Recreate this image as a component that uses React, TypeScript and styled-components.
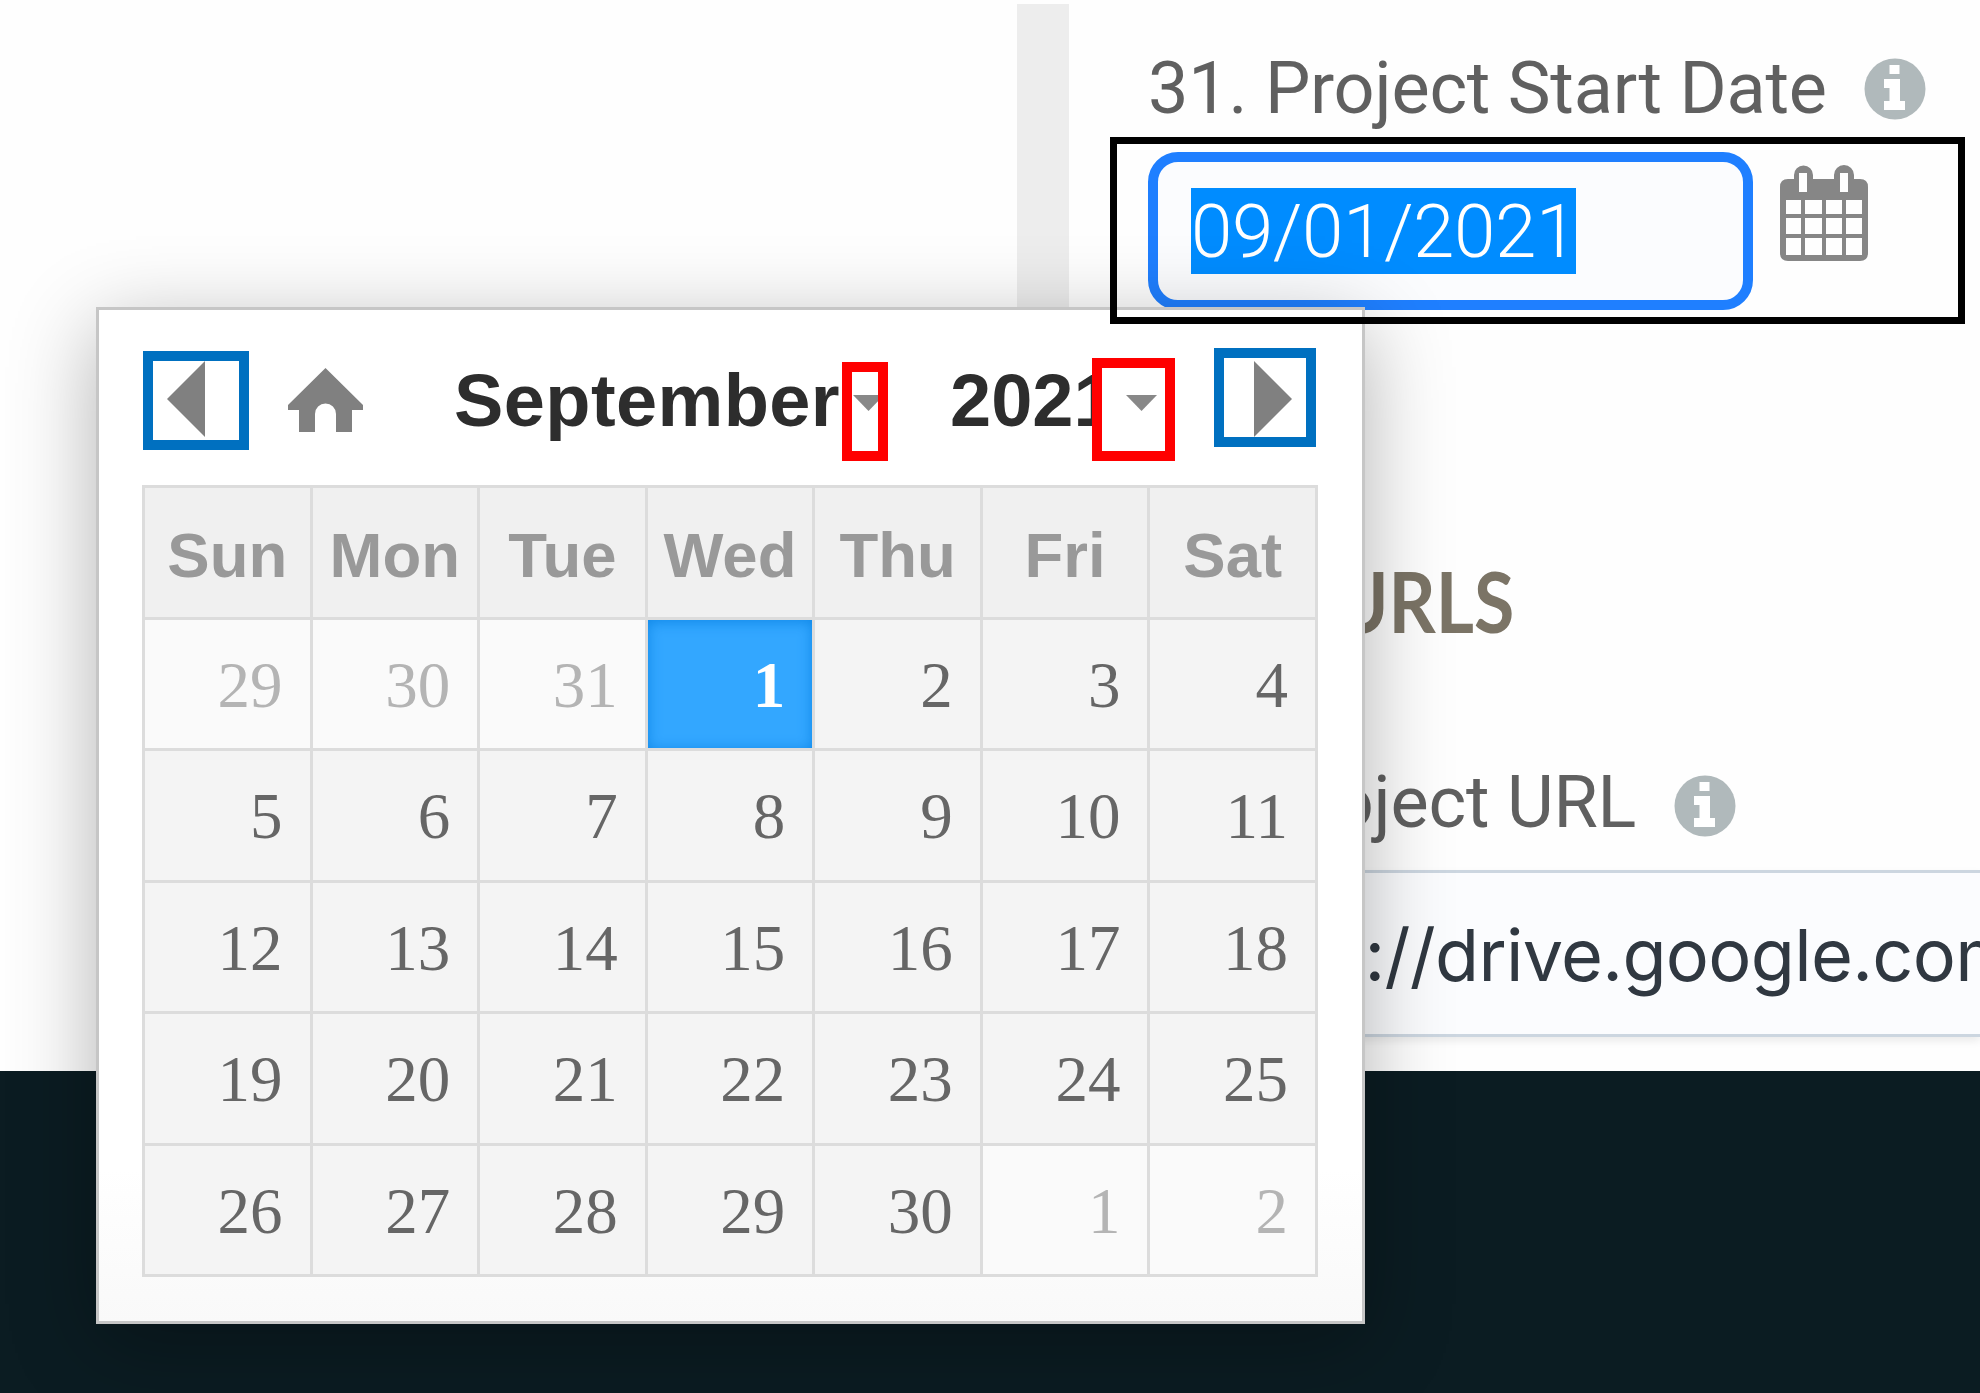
import React from "react";
import styled, { createGlobalStyle } from "styled-components";

const Global = createGlobalStyle`
  * { box-sizing: border-box; }
  body { margin: 0; background: #fff; }
`;

const Page = styled.div`
  position: relative;
  width: 1980px;
  height: 1393px;
  overflow: hidden;
  display: flex;
  flex-direction: column;
  background: #fefefe;
  font-family: Roboto, "Liberation Sans", sans-serif;
`;

const Main = styled.main`
  height: 1071px;
  display: flex;
`;

const Divider = styled.div`
  width: 52px;
  height: 1000px;
  margin: 4px 0 0 1017px;
  background: #ededed;
  flex: none;
`;

const Form = styled.section`
  width: 911px;
  flex: none;
  display: flex;
  flex-direction: column;
  padding-left: 79px;
`;

const Label = styled.div<{ $top: number; $indent: number; $gap: number }>`
  display: flex;
  align-items: center;
  gap: ${(p) => p.$gap}px;
  height: 84px;
  margin-top: ${(p) => p.$top}px;
  padding-left: ${(p) => p.$indent}px;
  font-size: 72px;
  line-height: 84px;
  letter-spacing: -0.22px;
  color: #606060;
  white-space: nowrap;
`;

const DateRow = styled.div`
  display: flex;
  align-items: flex-start;
  gap: 27px;
  margin-top: 21px;
`;

const DateField = styled.div`
  width: 605px;
  height: 158px;
  border: 10px solid #1f7fff;
  border-radius: 30px;
  background: #fbfcfe;
  padding: 26px 0 0 33px;
`;

const Selection = styled.span`
  display: block;
  width: 385px;
  height: 86px;
  background: #008cff;
  color: #fff;
  font-size: 74.5px;
  font-weight: 300;
  letter-spacing: -0.4px;
  line-height: 88px;
  white-space: nowrap;
`;

const Heading = styled.h2`
  margin: 241px 0 0 186px;
  height: 100px;
  font: 700 84px/100px Lato, sans-serif;
  color: #7b7466;
  transform: scaleX(0.875);
  transform-origin: left;
`;

const UrlField = styled.div`
  height: 167px;
  margin-top: 25px;
  border: 3px solid #ccd6e0;
  border-right: 0;
  background: #fbfcfe;
  box-shadow: 0 4px 8px rgba(0, 0, 0, 0.08);
  padding-left: 47px;
  font: 400 72px/164px Inter, sans-serif;
  letter-spacing: -0.7px;
  color: #303841;
  white-space: nowrap;
  overflow: hidden;
`;

const Footer = styled.footer`
  flex: 1;
  background: #0b1c22;
`;

const Popup = styled.div`
  position: absolute;
  left: 96px;
  top: 307px;
  width: 1269px;
  height: 1017px;
  border: 3px solid #c6c6c6;
  background: linear-gradient(#fff 85%, #f9f9f9);
  box-shadow: 0 20px 80px rgba(0, 0, 0, 0.3);
  padding: 0 43px;
`;

const Toolbar = styled.div`
  display: flex;
  align-items: center;
  height: 175px;
  font: 700 74px/84px "Liberation Sans", sans-serif;
  color: #2d2d2d;
  padding: 3px 0 0 25px;
`;

const MonthName = styled.span`
  margin-left: 91px;
  padding-top: 4px;
  width: 399px;
  letter-spacing: 0.4px;
`;

const YearName = styled.span`
  margin-left: 66px;
  padding-top: 4px;
  width: 151px;
  overflow: hidden;
`;

const Grid = styled.div`
  display: grid;
  grid-template-columns: repeat(7, minmax(0, 1fr));
  grid-template-rows: repeat(6, minmax(0, 1fr));
  gap: 3px;
  width: 1176px;
  height: 792px;
  border: 3px solid #dcdcdc;
  background: #dcdcdc;
`;

const Weekday = styled.div`
  background: #f0f0f0;
  color: #999;
  font: 700 63.5px/135px "Liberation Sans", sans-serif;
  text-align: center;
  overflow: hidden;
`;

const Day = styled.div<{ $kind: string }>`
  padding-right: 27px;
  text-align: right;
  font: ${(p) => (p.$kind === "selected" ? 700 : 400)} 65px/130px "Liberation Serif", serif;
  color: ${(p) => (p.$kind === "selected" ? "#fff" : p.$kind === "outside" ? "#b4b4b4" : "#666")};
  background: ${(p) => (p.$kind === "selected" ? "#33a7ff" : p.$kind === "outside" ? "#fafafa" : "#f4f4f4")};
  box-shadow: ${(p) => (p.$kind === "selected" ? "inset 0 2px 14px #1088e8" : "none")};
`;

const Mark = styled.div<{ $x: number; $y: number; $w: number; $h: number; $color: string; $line?: number }>`
  position: absolute;
  left: ${(p) => p.$x}px;
  top: ${(p) => p.$y}px;
  width: ${(p) => p.$w}px;
  height: ${(p) => p.$h}px;
  border: ${(p) => p.$line ?? 10}px solid ${(p) => p.$color};
`;

const Svg = styled.svg<{ $ml?: number; $mt?: number }>`
  display: block;
  flex: none;
  margin-left: ${(p) => p.$ml ?? 0}px;
  margin-top: ${(p) => p.$mt ?? 0}px;
`;

const Info = ({ shift }: { shift: number }) => (
  <Svg width="62" height="62" viewBox="0 0 62 62" $mt={shift}>
    <circle cx="31" cy="31" r="30.5" fill="#b0b9bb" />
    <path d="M25.500 7h10v9h-10zM20 21h16v22h5v9H20v-9h5.500V30H20z" fill="#fff" />
  </Svg>
);

const CalendarIcon = () => (
  <Svg width="89" height="97" viewBox="0 0 89 97" $mt={13}>
    <path
      fill="#868686"
      fillRule="evenodd"
      d="M8 14h6V10a9.500 9.500 0 0 1 19 0v4h21V10a9.500 9.500 0 0 1 20 0v4h6q8 0 8 8v66q0 8-8 8H8q-8 0-8-8V22q0-8 8-8zM19 8v19h8V8zM60 8v19h8V8zM6 35v14h15V35zM25 35v14h17V35zM46 35v14h16V35zM66 35v14h16V35zM6 53v16h15V53zM25 53v16h17V53zM46 53v16h16V53zM66 53v16h16V53zM6 73v17h15V73zM25 73v17h17V73zM46 73v17h16V73zM66 73v17h16V73z"
    />
  </Svg>
);

const weekdays = ["Sun", "Mon", "Tue", "Wed", "Thu", "Fri", "Sat"];
const days = [29, 30, 31, ...Array.from({ length: 30 }, (_, i) => i + 1), 1, 2];

const kindOf = (i: number) => (i === 3 ? "selected" : i < 3 || i > 32 ? "outside" : "normal");

export default function App() {
  return (
    <Page>
      <Global />
      <Main>
        <Divider />
        <Form>
          <Label $top={47} $indent={0} $gap={37}>
            <span>31. Project Start Date</span>
            <Info shift={-1} />
          </Label>
          <DateRow>
            <DateField>
              <Selection>09/01/2021</Selection>
            </DateField>
            <CalendarIcon />
          </DateRow>
          <Heading>URLS</Heading>
          <Label $top={110} $indent={116} $gap={38}>
            <span>Project URL</span>
            <Info shift={6} />
          </Label>
          <UrlField>https://drive.google.com</UrlField>
        </Form>
      </Main>
      <Footer />
      <Popup>
        <Toolbar>
          <Svg width="38" height="76" viewBox="0 0 38 76">
            <path d="M0 38L38 0V76Z" fill="#808080" />
          </Svg>
          <Svg width="75" height="64" viewBox="0 0 75 64" $ml={83} $mt={2}>
            <path d="M37.500 0L75 37v5H64V64H48V46a10.500 10.500 0 0 0-21 0V64H11V42H0V37Z" fill="#808080" />
          </Svg>
          <MonthName>September</MonthName>
          <Svg width="31" height="16" viewBox="0 0 31 16" $mt={7}>
            <path d="M0 0H31L15.500 16Z" fill="#888" />
          </Svg>
          <YearName>2021</YearName>
          <Svg width="31" height="16" viewBox="0 0 31 16" $ml={25} $mt={7}>
            <path d="M0 0H31L15.500 16Z" fill="#888" />
          </Svg>
          <Svg width="38" height="76" viewBox="0 0 38 76" $ml={97}>
            <path d="M38 38L0 0V76Z" fill="#808080" />
          </Svg>
        </Toolbar>
        <Grid>
          {weekdays.map((d) => (
            <Weekday key={d}>{d}</Weekday>
          ))}
          {days.map((d, i) => (
            <Day key={i} $kind={kindOf(i)}>
              {d}
            </Day>
          ))}
        </Grid>
      </Popup>
      <Mark $x={1110} $y={137} $w={855} $h={187} $color="#000" $line={7} />
      <Mark $x={143} $y={351} $w={106} $h={99} $color="#0070c0" />
      <Mark $x={1214} $y={348} $w={102} $h={99} $color="#0070c0" />
      <Mark $x={842} $y={362} $w={46} $h={99} $color="#f00" />
      <Mark $x={1092} $y={358} $w={83} $h={103} $color="#f00" />
    </Page>
  );
}
